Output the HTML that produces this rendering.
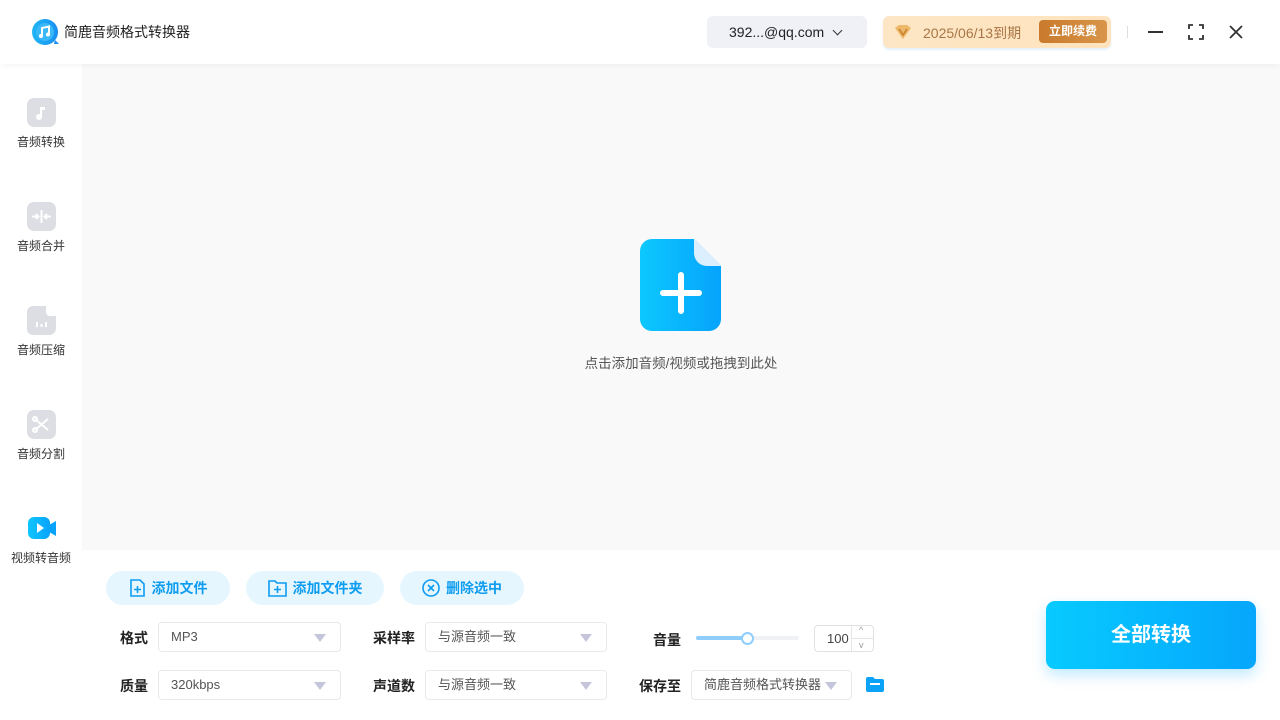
<!DOCTYPE html>
<html><head><meta charset="utf-8"><style>
*{margin:0;padding:0;box-sizing:border-box}
body{width:1280px;height:720px;overflow:hidden;background:#fff;font-family:"Liberation Sans","Noto Sans CJK SC",sans-serif;position:relative;color:#333}
.abs{position:absolute}
.top{left:0;top:0;width:1280px;height:64px;background:#fff;box-shadow:0 2px 6px rgba(0,0,0,.04);z-index:2}
.side{left:0;top:64px;width:82px;height:656px;background:#fff}
.main{left:82px;top:64px;width:1198px;height:486px;background:#f9f9fa}
.nav{position:absolute;left:0;width:82px;text-align:center;font-size:12px;color:#333}
.nav .ic{width:29px;height:29px;border-radius:7px;background:#dcdee4;margin:0 auto 6px;position:relative}
.btn{position:absolute;top:571px;height:34px;border-radius:17px;background:#e6f6ff;color:#0d9cf0;font-size:14px;font-weight:bold;display:flex;align-items:center;justify-content:center;gap:6px}
.lbl{position:absolute;font-size:14px;font-weight:bold;color:#222}
.sel{position:absolute;height:30px;border:1px solid #e6e8ee;border-radius:4px;background:#fff;font-size:13px;color:#555;padding-left:12px;line-height:28px}
.sel .tri{position:absolute;right:14px;top:11px;width:0;height:0;border-left:6px solid transparent;border-right:6px solid transparent;border-top:8px solid #c5c6dc}
</style></head><body>
<div class="abs top">
  <svg class="abs" style="left:31px;top:18px" width="29" height="29" viewBox="0 0 29 29"><defs><linearGradient id="lg" x1="0" x2="1"><stop offset="0" stop-color="#1fb6f5"/><stop offset="1" stop-color="#1a8ef0"/></linearGradient></defs><circle cx="14" cy="14" r="13" fill="url(#lg)"/><circle cx="14" cy="14" r="9" fill="#3ab8f7"/><path d="M11 18V10l7-1.5v8" stroke="#fff" stroke-width="2" fill="none"/><circle cx="10" cy="18" r="2" fill="#fff"/><circle cx="17" cy="16.5" r="2" fill="#fff"/><path d="M24 22l4 4-5 0z" fill="#1a8ef0"/></svg>
  <div class="abs" style="left:64px;top:22px;font-size:14px;color:#222">简鹿音频格式转换器</div>
  <div class="abs" style="left:707px;top:16px;width:160px;height:32px;border-radius:6px;background:#eff1f7;font-size:14px;color:#222;line-height:32px;padding-left:22px">392...@qq.com <span style="display:inline-block;width:7px;height:7px;border-right:1.6px solid #333;border-bottom:1.6px solid #333;transform:rotate(45deg);margin:0 0 3px 6px"></span></div>
  <div class="abs" style="left:883px;top:16px;width:228px;height:32px;border-radius:6px;background:linear-gradient(90deg,#fde6c5,#fee3bd);box-shadow:0 2px 2px #e4f1fb">
    <svg class="abs" style="left:10px;top:8px" width="20" height="16" viewBox="0 0 20 16"><path d="M2 4l4-3h8l4 3-8 11z" fill="#eeb86a"/><path d="M6 5l4 6 4-6" stroke="#c98530" stroke-width="1.6" fill="none"/></svg>
    <span class="abs" style="left:40px;top:7px;font-size:14px;color:#a87646">2025/06/13到期</span>
    <span class="abs" style="left:156px;top:4px;width:68px;height:23px;border-radius:4px;background:linear-gradient(90deg,#c97a2c,#d8954a);color:#fff;font-size:12px;font-weight:bold;text-align:center;line-height:23px">立即续费</span>
  </div>
  <div class="abs" style="left:1127px;top:26px;width:1px;height:12px;background:#ddd"></div>
  <div class="abs" style="left:1148px;top:31px;width:15px;height:2px;background:#333"></div>
  <svg class="abs" style="left:1188px;top:24px" width="16" height="16" viewBox="0 0 16 16" fill="none" stroke="#333" stroke-width="1.8"><path d="M1 5V1h4M11 1h4v4M15 11v4h-4M5 15H1v-4"/></svg>
  <svg class="abs" style="left:1229px;top:25px" width="14" height="14" viewBox="0 0 14 14" stroke="#333" stroke-width="1.8"><path d="M1 1l12 12M13 1L1 13"/></svg>
</div>
<div class="abs side">
  <div class="nav" style="top:34px"><div class="ic"><svg width="29" height="29" viewBox="0 0 29 29"><path d="M13 19V9h5v3h-3v7" fill="#fff"/><circle cx="12" cy="19" r="3" fill="#fff"/></svg></div>音频转换</div>
  <div class="nav" style="top:138px"><div class="ic"><svg width="29" height="29" viewBox="0 0 29 29" stroke="#fff" stroke-width="2" fill="none"><path d="M14.5 8v13M5 14.5h6M9 12l2.5 2.5L9 17M24 14.5h-6M20 12l-2.5 2.5L20 17"/></svg></div>音频合并</div>
  <div class="nav" style="top:242px"><div class="ic" style="background:none"><svg width="29" height="29" viewBox="0 0 29 29"><path d="M6 0h13l10 10v12a7 7 0 0 1-7 7H6a6 6 0 0 1-6-6V6a6 6 0 0 1 6-6z" fill="#dcdee4"/><path d="M19 0v6a4 4 0 0 0 4 4h6" fill="#fff"/><path d="M10 16v5M14.5 18v3M19 16v5" stroke="#fff" stroke-width="2"/></svg></div>音频压缩</div>
  <div class="nav" style="top:346px"><div class="ic"><svg width="29" height="29" viewBox="0 0 29 29" stroke="#fff" stroke-width="2" fill="none"><path d="M8 9l13 11M21 9L8 20"/><circle cx="8" cy="9" r="2"/><circle cx="8" cy="20" r="2"/></svg></div>音频分割</div>
  <div class="nav" style="top:450px"><div class="ic" style="background:none"><svg width="32" height="29" viewBox="0 0 32 29"><defs><linearGradient id="vg" x1="0" x2="1"><stop offset="0" stop-color="#0fc6ff"/><stop offset="1" stop-color="#08a3fb"/></linearGradient></defs><rect x="1" y="3" width="22" height="22" rx="6" fill="url(#vg)"/><path d="M22 11l7-4v15l-7-4z" fill="#08a3fb"/><path d="M10 9l7 5-7 5z" fill="#fff"/></svg></div>视频转音频</div>
</div>
<div class="abs main">
  <svg class="abs" style="left:558px;top:175px" width="82" height="92" viewBox="0 0 82 92"><defs><linearGradient id="fg" x1="0" x2="1"><stop offset="0" stop-color="#0cc8fe"/><stop offset="1" stop-color="#06a3fc"/></linearGradient></defs><path d="M12 0h42l27 27v53a12 12 0 0 1-12 12H12A12 12 0 0 1 0 80V12A12 12 0 0 1 12 0z" fill="url(#fg)"/><path d="M54 0v14a13 13 0 0 0 13 13h14z" fill="#dbeffc"/><path d="M41 36v36M23 54h36" stroke="#fff" stroke-width="6" stroke-linecap="round"/></svg>
  <div class="abs" style="left:0;width:1198px;top:288px;text-align:center;font-size:13.5px;color:#555">点击添加音频/视频或拖拽到此处</div>
</div>
<div class="btn" style="left:106px;width:124px"><svg width="17" height="18" viewBox="0 0 17 18" fill="none" stroke="#0d9cf0" stroke-width="1.6"><path d="M2 1h9l4 4v12H2z"/><path d="M8.5 7v7M5 10.5h7"/></svg>添加文件</div>
<div class="btn" style="left:246px;width:138px"><svg width="19" height="17" viewBox="0 0 19 17" fill="none" stroke="#0d9cf0" stroke-width="1.6"><path d="M1 1h6l2 2h9v13H1z"/><path d="M9.5 6v7M6 9.5h7"/></svg>添加文件夹</div>
<div class="btn" style="left:400px;width:124px"><svg width="18" height="18" viewBox="0 0 18 18" fill="none" stroke="#0d9cf0" stroke-width="1.6"><circle cx="9" cy="9" r="8"/><path d="M6 6l6 6M12 6l-6 6"/></svg>删除选中</div>
<div class="lbl" style="left:120px;top:628px">格式</div>
<div class="sel" style="left:158px;top:622px;width:183px">MP3<i class="tri"></i></div>
<div class="lbl" style="left:373px;top:628px">采样率</div>
<div class="sel" style="left:425px;top:622px;width:182px">与源音频一致<i class="tri"></i></div>
<div class="lbl" style="left:120px;top:676px">质量</div>
<div class="sel" style="left:158px;top:670px;width:183px">320kbps<i class="tri"></i></div>
<div class="lbl" style="left:373px;top:676px">声道数</div>
<div class="sel" style="left:425px;top:670px;width:182px">与源音频一致<i class="tri"></i></div>
<div class="lbl" style="left:653px;top:630px">音量</div>
<div class="abs" style="left:696px;top:636px;width:103px;height:4px;border-radius:2px;background:#f0f1f4"></div>
<div class="abs" style="left:696px;top:636px;width:52px;height:4px;border-radius:2px;background:#8fcdfc"></div>
<div class="abs" style="left:741px;top:632px;width:13px;height:13px;border-radius:50%;background:#fff;border:2px solid #8fcdfc"></div>
<div class="abs" style="left:814px;top:625px;width:60px;height:27px;border:1px solid #dfe1e6;border-radius:4px;font-size:13px;color:#444;line-height:26px;padding-left:12px">100<div class="abs" style="left:36px;top:0;width:1px;height:25px;background:#e5e5e5"></div><div class="abs" style="left:37px;top:12px;width:21px;height:1px;background:#e5e5e5"></div><span class="abs" style="left:44px;top:-9px;font-size:9px;color:#999">^</span><span class="abs" style="left:44px;top:6px;font-size:9px;color:#999">v</span></div>
<div class="lbl" style="left:639px;top:676px">保存至</div>
<div class="sel" style="left:691px;top:670px;width:161px">简鹿音频格式转换器<i class="tri" style="right:14px"></i></div>
<svg class="abs" style="left:866px;top:677px" width="18" height="15" viewBox="0 0 18 15"><path d="M0 2a2 2 0 0 1 2-2h5l2 2h7a2 2 0 0 1 2 2v9a2 2 0 0 1-2 2H2a2 2 0 0 1-2-2z" fill="#0aa3f8"/><path d="M4 7h10" stroke="#fff" stroke-width="2"/></svg>
<div class="abs" style="left:1046px;top:601px;width:210px;height:68px;border-radius:9px;background:linear-gradient(90deg,#07caff,#06a6fc);box-shadow:0 6px 14px rgba(6,170,252,.25);color:#fff;font-size:20px;font-weight:bold;text-align:center;line-height:68px">全部转换</div>
</body></html>
